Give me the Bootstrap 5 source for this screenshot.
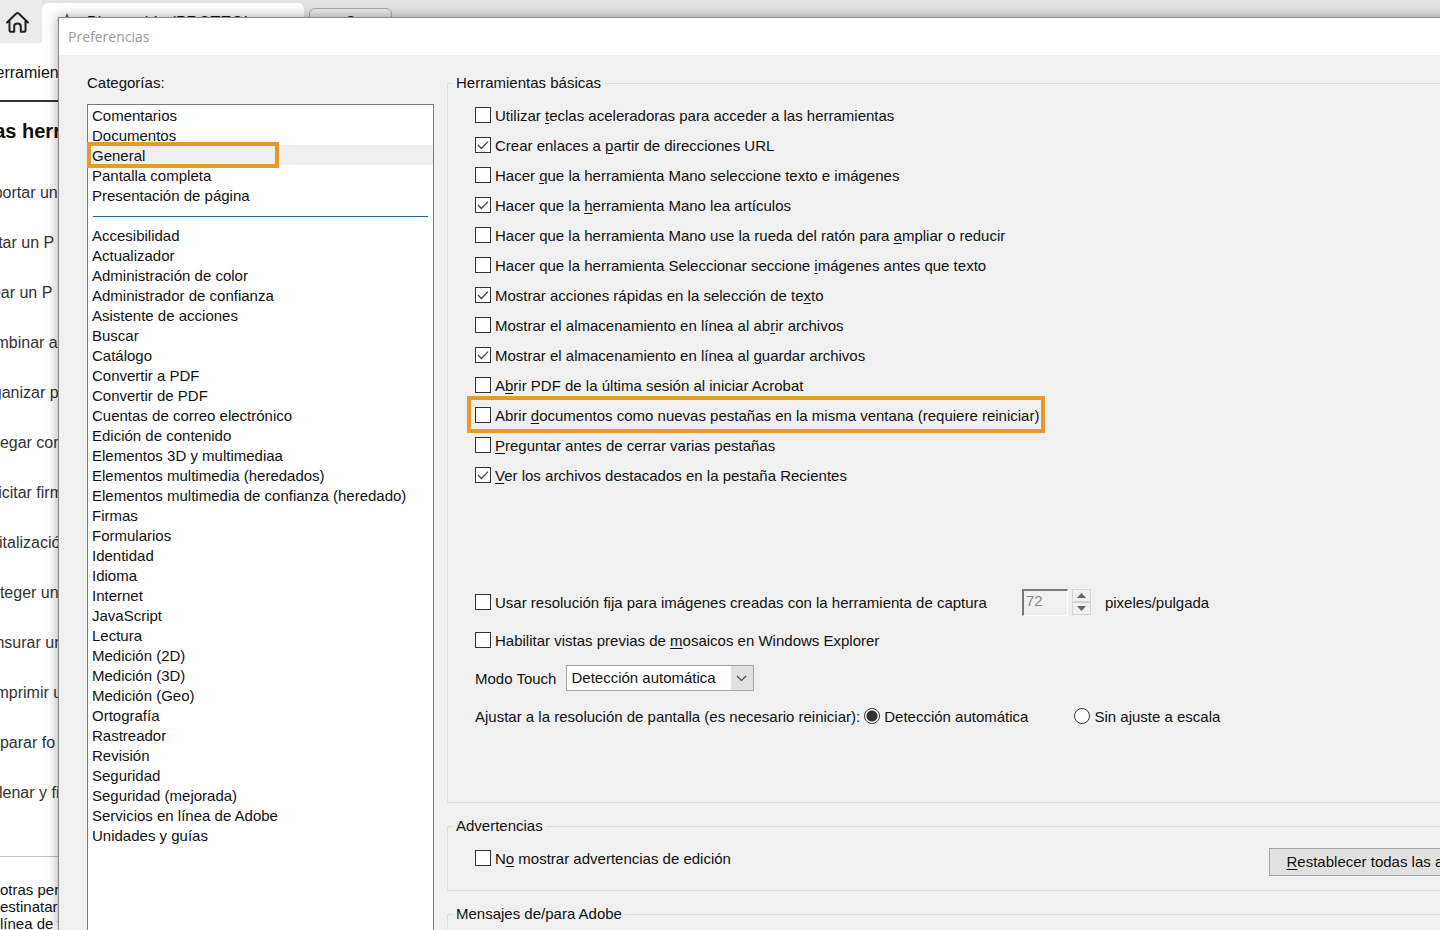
<!DOCTYPE html>
<html lang="es">
<head>
<meta charset="utf-8">
<meta name="viewport" content="width=device-width, initial-scale=1">
<title>Preferencias</title>
<link href="https://cdn.jsdelivr.net/npm/bootstrap@5.3.0/dist/css/bootstrap.min.css" rel="stylesheet">
<style>
body{font-family:"Liberation Sans",Arial,sans-serif;font-size:15px;line-height:20px;color:#111;background:#fff}
.app{min-height:100vh}
a{color:inherit;text-decoration:none}
/* application behind the dialog */
.tabbar{height:43px;background:#e4e4e4}
.home-btn{width:42px;border:0;background:#ebebeb}
.doc-tab{width:262px;margin-top:3px;padding-left:15px;border-radius:6px 6px 0 0;background:#fff;font-size:16px;gap:10px}
.new-tab{width:83px;height:29px;margin:8px 0 0 5px;border:1px solid #aaa;border-radius:6px;background:#e8e8e8;font-size:16px;color:#222}
.menu-link{height:57px;padding-top:20px;margin-left:-16px;font-size:16px}
.tools-side{border-top:2px solid #333}
.tools-title{font-size:20px;line-height:24px;font-weight:700;margin:17px 0 25px -18px}
.tool-link{height:50px;margin-left:-25px;font-size:16px;color:#333}
.side-note{border-top:1px solid #c4c4c4;margin-top:38px;padding-top:24px;line-height:17px}
/* dialog */
.pref{top:17px;left:58px;right:-131px;bottom:0;border:1px solid #8a8a8a;background:#f0f0f0;box-shadow:0 0 12px rgba(0,0,0,.35)}
.pref-title{height:37px;padding-left:9px;background:#fff;color:#999;font:14px/37px "Open Sans","Noto Sans",sans-serif}
.pref-body{padding:18px 16px 0 28px;gap:13px}
.cats{width:347px}
.cat-box{margin-top:11px;border:1px solid #7a7a7a;background:#fff}
.cat-link{height:20px;padding:1px 4px 0;border:0;border-radius:0;background:none;color:#111;line-height:19px}
.cat-link.chosen{background:#efefef}
.cat-sep{height:1px;margin:11px 5px 8px;background:#1769a5;border:0;opacity:1}
.hl{border:4px solid #e8992c;pointer-events:none}
.hl-cat{left:-1px;top:-3px;width:192px;height:26px}
.hl-opt{left:-8px;right:-6px;top:-4px;height:37px}
.group{border:1px solid #dcdcdc;padding:0 15px 0 27px;margin:0 0 13px}
.group legend{float:none;width:auto;margin:0 0 0 -22px;padding:0 3px;font-size:15px;line-height:20px}
.opt{height:30px;gap:4px}
.opt-tall{height:38px;gap:4px}
.opt label,.opt-tall label,.lbl{line-height:20px;padding-top:1px}
.form-check-input.tick{width:16px;height:16px;margin:0;float:none;border:1px solid #333;border-radius:0;background-color:#fff;flex:none}
.form-check-input.tick:checked{background-color:#fff;background-size:14px 14px;background-image:url("data:image/svg+xml,%3Csvg xmlns='http://www.w3.org/2000/svg' viewBox='0 0 14 14'%3E%3Cpath fill='none' stroke='%23444' stroke-width='1.3' d='M2 7l3.4 3.5L12 3.6'/%3E%3C/svg%3E")}
.form-check-input.tick[type=radio]{border-radius:50%}
.form-check-input.tick[type=radio]:checked{background-image:radial-gradient(circle,#333 5px,transparent 6px)}
.opts{padding-top:7px}
.lower{margin-top:93px;padding-bottom:67px}
.num{width:46px;height:27px;margin-left:31px;padding:0 0 4px 2px;border:solid;border-width:2px 1px 1px 2px;border-color:#777 #fff #fff #777;border-radius:0;background:#f0f0f0;color:#888;font-size:15px}
.spin{width:19px;margin-right:10px}
.spin button{height:13px;border:1px solid #d5d5d5;background:#f0f0f0;padding:0}
.spin svg{display:block}
.mode{width:188px;height:26px;margin-left:6px;padding:0 24px 0 4px;font-size:15px;line-height:22px;color:#111;border:1px solid #a5a5a5;border-radius:0;background:url("data:image/svg+xml,%3Csvg xmlns='http://www.w3.org/2000/svg' viewBox='0 0 22 24'%3E%3Cpath fill='%23e1e1e1' d='M0 0h22v24H0z'/%3E%3Cpath fill='none' stroke='%23444' stroke-width='1.1' d='M6 10l4.500 4.500 4.500-4.500'/%3E%3C/svg%3E") right center/22px 24px no-repeat #fff}
.reset{height:28px;margin-top:5px;padding:0 17px;border:1px solid #a5a5a5;border-radius:0;background:#e1e1e1;color:#111;font-size:15px;line-height:26px}
.warn{padding-top:7px;padding-bottom:14px}
.mid-gap{margin-right:42px}
.acc{text-underline-offset:2px;text-decoration:underline;text-decoration-thickness:1px}
.cats .acc{text-underline-offset:1px}
</style>
</head>
<body>
<div class="app position-relative overflow-hidden">
  <div class="tabbar d-flex">
    <button class="home-btn d-flex align-items-center p-0" type="button" aria-label="Inicio">
      <svg class="ms-1" width="26" height="26" viewBox="0 0 26 26" fill="none" stroke="#222" stroke-width="2" stroke-linejoin="round" stroke-linecap="round"><path d="M3 13.500 12 4.700q1.500-1.300 3 0L24 13.500M5.500 12v9.500q0 1.200 1.200 1.200h3.500v-5.500q0-2.600 3.300-2.600t3.300 2.600v5.500h3.500q1.200 0 1.200-1.200V12"/></svg>
    </button>
    <div class="doc-tab d-flex align-items-center">
      <svg width="20" height="20" viewBox="0 0 14 14" fill="#666" aria-hidden="true"><path d="M7 0l2 4.800 5 .5-3.800 3.400L11.400 14 7 11 2.600 14l1.200-5.300L0 5.300l5-.5z"/></svg>
      <span>Bienvenido (PROTEGI</span>
    </div>
    <button class="new-tab d-flex align-items-center justify-content-center gap-3 p-0" type="button">
      <svg width="12" height="12" stroke="#222" stroke-width="2" aria-hidden="true"><path d="M6 0v12M0 6h12"/></svg><span>Crear</span>
    </button>
  </div>
  <a class="menu-link d-block" href="#">Herramien</a>
  <aside class="tools-side">
    <h1 class="tools-title">Las herr</h1>
    <nav class="d-flex flex-column" id="tools"></nav>
    <p class="side-note mb-0 text-nowrap">otras pers<br>estinatario<br>línea de f</p>
  </aside>

  <section class="pref position-absolute d-flex flex-column" role="dialog" aria-label="Preferencias">
    <header class="pref-title">Preferencias</header>
    <div class="pref-body d-flex flex-grow-1">
      <div class="cats d-flex flex-column flex-shrink-0">
        <div>Cate<span class="acc">g</span>orías:</div>
        <nav class="cat-box list-group rounded-0 flex-grow-1" id="cats"></nav>
      </div>
      <form class="flex-grow-1">
        <fieldset class="group">
          <legend>Herramientas básicas</legend>
          <div id="opts" class="opts d-flex flex-column align-items-start"></div>
          <div class="lower">
            <div class="opt-tall d-flex align-items-center">
              <input class="form-check-input tick" type="checkbox" id="fix"><label for="fix">Usar resolución fija para imágenes creadas con la herramienta de captura</label>
              <input class="num" type="text" value="72" aria-label="Resolución" disabled>
              <div class="spin d-flex flex-column">
                <button type="button" aria-label="Aumentar" disabled><svg class="m-auto" width="9" height="5"><path d="M4.500 0 9 5H0z" fill="#666"/></svg></button>
                <button type="button" aria-label="Reducir" disabled><svg class="m-auto" width="9" height="5"><path d="M4.500 5 9 0H0z" fill="#666"/></svg></button>
              </div>
              <span class="lbl">pixeles/pulgada</span>
            </div>
            <div class="opt-tall d-flex align-items-center">
              <input class="form-check-input tick" type="checkbox" id="mos"><label for="mos">Habilitar vistas previas de <span class="acc">m</span>osaicos en Windows Explorer</label>
            </div>
            <div class="opt-tall d-flex align-items-center">
              <label for="touch">Modo Touch</label>
              <select class="form-select mode" id="touch"><option>Detección automática</option></select>
            </div>
            <div class="opt-tall d-flex align-items-center">
              <span class="lbl">Ajustar a la resolución de pantalla (es necesario reiniciar):</span>
              <input class="form-check-input tick" type="radio" name="scale" id="auto" checked><label for="auto" class="mid-gap">Detección automática</label>
              <input class="form-check-input tick" type="radio" name="scale" id="none"><label for="none">Sin ajuste a escala</label>
            </div>
          </div>
        </fieldset>
        <fieldset class="group">
          <legend>Advertencias</legend>
          <div class="warn d-flex align-items-start">
            <div class="opt d-flex align-items-center"><input class="form-check-input tick" type="checkbox" id="warn"><label for="warn">N<span class="acc">o</span> mostrar advertencias de edición</label></div>
            <button class="btn reset ms-auto text-nowrap" type="button"><span class="acc">R</span>establecer todas las advertencias</button>
          </div>
        </fieldset>
        <fieldset class="group mb-0 pb-4 border-bottom-0">
          <legend>Mensajes de/para Adobe</legend>
        </fieldset>
      </form>
    </div>
  </section>
</div>
<script src="https://cdn.jsdelivr.net/npm/bootstrap@5.3.0/dist/js/bootstrap.bundle.min.js"></script>
<script>
const tools = ['Exportar un','Editar un P','Crear un P','Combinar a','Organizar p','Agregar com','Solicitar firm','Digitalizació','Proteger un','Censurar un','Comprimir u','Preparar fo','Rellenar y fi'];
document.getElementById('tools').innerHTML = tools.map(t => `<a class="tool-link d-flex align-items-center text-nowrap" href="#">${t}</a>`).join('');

const cats = ['Comentarios','Documentos','General','Pantalla completa','Presentación de página',null,'Accesibilidad','Actualizador','Administración de color','Administrador de confianza','Asistente de acciones','Buscar','Catálogo','Convertir a PDF','Convertir de PDF','Cuentas de correo electrónico','Edición de contenido','Elementos 3D y multimediaa','Elementos multimedia (heredados)','Elementos multimedia de confianza (heredado)','Firmas','Formularios','Identidad','Idioma','Internet','JavaScript','Lectura','Medición (2D)','Medición (3D)','Medición (Geo)','Ortografía','Rastreador','Revisión','Seguridad','Seguridad (mejorada)','Servicios en línea de Adobe','Unidades y guías'];
document.getElementById('cats').innerHTML = cats.map(c => c === null ? '<div class="cat-sep" role="separator"></div>' :
  `<a href="#" class="list-group-item cat-link${c === 'General' ? ' chosen' : ''}">${c}${c === 'General' ? '<span class="hl hl-cat position-absolute"></span>' : ''}</a>`).join('');

// "_" precedes the access key letter
const opts = [['Utilizar _teclas aceleradoras para acceder a las herramientas',0],['Crear enlaces a _partir de direcciones URL',1],['Hacer _que la herramienta Mano seleccione texto e imágenes',0],['Hacer que la _herramienta Mano lea artículos',1],['Hacer que la herramienta Mano use la rueda del ratón para _ampliar o reducir',0],['Hacer que la herramienta Seleccionar seccione _imágenes antes que texto',0],['Mostrar acciones rápidas en la selección de te_xto',1],['Mostrar el almacenamiento en línea al ab_rir archivos',0],['Mostrar el almacenamiento en línea al _guardar archivos',1],['A_brir PDF de la última sesión al iniciar Acrobat',0],['Abrir _documentos como nuevas pestañas en la misma ventana (requiere reiniciar)',0,1],['_Preguntar antes de cerrar varias pestañas',0],['_Ver los archivos destacados en la pestaña Recientes',1]];
document.getElementById('opts').innerHTML = opts.map(([t, on, mark], i) =>
  `<div class="opt d-flex align-items-center position-relative"><input class="form-check-input tick" type="checkbox" id="o${i}"${on ? ' checked' : ''}><label for="o${i}">${t.replace(/_(.)/, '<span class="acc">$1</span>')}</label>${mark ? '<span class="hl hl-opt position-absolute"></span>' : ''}</div>`).join('');
</script>
</body>
</html>
